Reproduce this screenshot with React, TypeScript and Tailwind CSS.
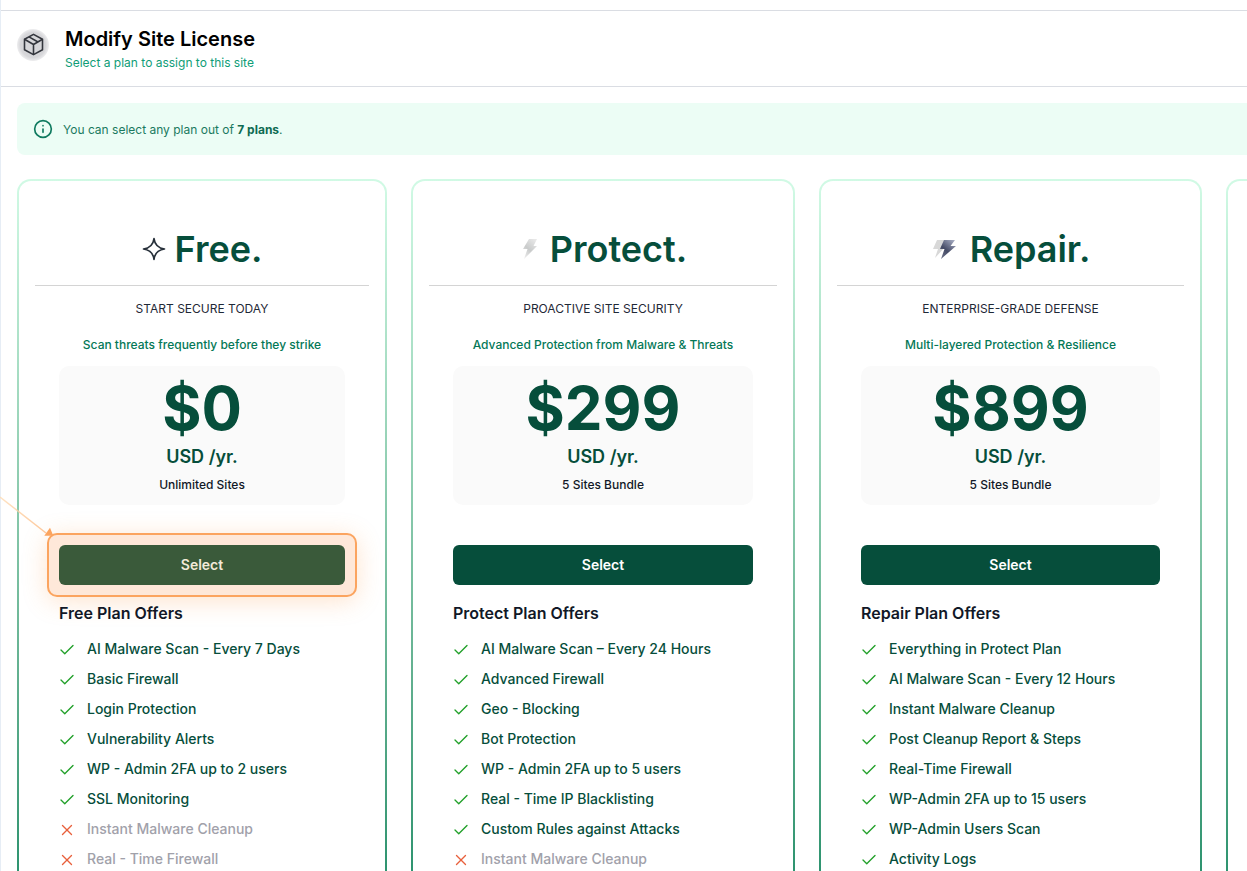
import React from "react";
import { Check, X, Info } from "lucide-react";

type Feature = [string, boolean];
type Plan = {
  name: string;
  tagline: string;
  sub: string;
  price: string;
  sites: string;
  offers: string;
  width: string;
  features: Feature[];
  icon: React.ReactNode;
};

const Star = () => (
  <svg width="24" height="24" viewBox="0 0 24 24" fill="none" stroke="#27303a" strokeWidth="1.7" strokeLinejoin="round">
    <path d="M12 1.500c.7 6.200 3.500 9.500 10.500 10.500-7 1-9.800 4.300-10.500 10.500-.7-6.200-3.500-9.500-10.500-10.500 7-1 9.800-4.300 10.500-10.500Z" />
  </svg>
);

const BoltLight = () => (
  <svg width="22" height="24" viewBox="0 0 22 24">
    <defs>
      <linearGradient id="bl" x1="0.8" y1="0" x2="0.2" y2="1">
        <stop offset="0" stopColor="#e8e8e8" />
        <stop offset="0.55" stopColor="#c9cbcb" />
        <stop offset="1" stopColor="#ececec" />
      </linearGradient>
    </defs>
    <path d="M10 2h8l-3.500 7H18L5 22l3.500-10H4Z" fill="url(#bl)" />
  </svg>
);

const BoltDouble = () => (
  <svg width="30" height="24" viewBox="0 0 30 24">
    <defs>
      <linearGradient id="bd" x1="0.9" y1="0" x2="0.2" y2="1">
        <stop offset="0" stopColor="#aab0c6" />
        <stop offset="0.6" stopColor="#454b66" />
        <stop offset="1" stopColor="#6a6f86" />
      </linearGradient>
    </defs>
    <path d="M6 3h8l-3.500 7H14L4 21l3-9H2Z" fill="#d8d8d8" />
    <path d="M13 3h11l-4.500 6H25L10 22l3.500-10H9Z" fill="url(#bd)" />
  </svg>
);

const plans: Plan[] = [
  {
    name: "Free.",
    tagline: "START SECURE TODAY",
    sub: "Scan threats frequently before they strike",
    price: "$0",
    sites: "Unlimited Sites",
    offers: "Free Plan Offers",
    width: "w-[370px]",
    icon: <Star />,
    features: [
      ["AI Malware Scan - Every 7 Days", true],
      ["Basic Firewall", true],
      ["Login Protection", true],
      ["Vulnerability Alerts", true],
      ["WP - Admin 2FA up to 2 users", true],
      ["SSL Monitoring", true],
      ["Instant Malware Cleanup", false],
      ["Real - Time Firewall", false],
    ],
  },
  {
    name: "Protect.",
    tagline: "PROACTIVE SITE SECURITY",
    sub: "Advanced Protection from Malware & Threats",
    price: "$299",
    sites: "5 Sites Bundle",
    offers: "Protect Plan Offers",
    width: "w-[384px]",
    icon: <BoltLight />,
    features: [
      ["AI Malware Scan – Every 24 Hours", true],
      ["Advanced Firewall", true],
      ["Geo - Blocking", true],
      ["Bot Protection", true],
      ["WP - Admin 2FA up to 5 users", true],
      ["Real - Time IP Blacklisting", true],
      ["Custom Rules against Attacks", true],
      ["Instant Malware Cleanup", false],
    ],
  },
  {
    name: "Repair.",
    tagline: "ENTERPRISE-GRADE DEFENSE",
    sub: "Multi-layered Protection & Resilience",
    price: "$899",
    sites: "5 Sites Bundle",
    offers: "Repair Plan Offers",
    width: "w-[383px]",
    icon: <BoltDouble />,
    features: [
      ["Everything in Protect Plan", true],
      ["AI Malware Scan - Every 12 Hours", true],
      ["Instant Malware Cleanup", true],
      ["Post Cleanup Report & Steps", true],
      ["Real-Time Firewall", true],
      ["WP-Admin 2FA up to 15 users", true],
      ["WP-Admin Users Scan", true],
      ["Activity Logs", true],
    ],
  },
];

function PlanCard({ plan, highlight }: { plan: Plan; highlight?: boolean }) {
  return (
    <div className={`${plan.width} shrink-0 h-[760px] rounded-[14px] p-[2px] bg-gradient-to-b from-[#d1fae5] to-[#0f8a65]`}>
      <div className="h-full rounded-[12px] bg-white px-4">
        <div className="flex h-[105px] items-center justify-center gap-[9px] border-b border-[#d4d4d4] pt-[39px] pb-[8px]">
          {plan.icon}
          <span className="text-[36px] font-semibold leading-[44px] text-[#064e3b]">{plan.name}</span>
        </div>
        <div className="px-6">
          <p className="mt-[14px] text-center text-[12px] leading-[18px] text-[#1f2937]">{plan.tagline}</p>
          <p className="mt-[18px] text-center text-[12px] font-medium leading-[18px] text-[#047857]">{plan.sub}</p>
          <div className="mt-[12px] flex h-[139px] flex-col items-center rounded-[10px] bg-[#fafafa] pt-[12px]">
            <span className="text-[60px] font-bold leading-[60px] text-[#064e3b]">{plan.price}</span>
            <span className="mt-[5px] text-[18px] font-semibold leading-[28px] text-[#064e3b]">USD /yr.</span>
            <span className="mt-[5px] text-[12px] font-medium leading-[18px] text-[#111827]">{plan.sites}</span>
          </div>
          <div className="relative mt-[40px]">
            {highlight && (
              <div className="absolute -inset-x-[12px] -inset-y-[12px] rounded-[10px] border-2 border-[#fba45f] bg-[#fee8d9] shadow-[0_4px_24px_rgba(251,146,60,0.25)]" />
            )}
            <button className={`relative block h-[40px] w-full rounded-[6px] pb-[2px] text-[14px] font-semibold ${highlight ? "bg-[#3a5a3a] text-[#f3ead9]" : "bg-[#064e3b] text-white"}`}>
              Select
            </button>
          </div>
          <h3 className="relative mt-[18px] text-[16px] font-semibold leading-[20px] text-[#111827]">{plan.offers}</h3>
          <ul className="mt-[10px] flex flex-col">
            {plan.features.map(([label, ok]) => (
              <li key={label} className="-ml-px flex h-[30px] items-center gap-[11px]">
                {ok ? (
                  <Check size={18} strokeWidth={1.8} className="mt-[4px] shrink-0 text-[#22a02a]" />
                ) : (
                  <X size={18} strokeWidth={1.8} className="mt-[4px] shrink-0 text-[#e8603c]" />
                )}
                <span className={`text-[14px] font-medium ${ok ? "text-[#064e3b]" : "text-[#a1a1aa]"}`}>{label}</span>
              </li>
            ))}
          </ul>
        </div>
      </div>
    </div>
  );
}

export default function App() {
  return (
    <div className="relative h-[871px] w-[1247px] overflow-hidden bg-white font-['Inter',sans-serif]">
      <div className="h-[10px]" />
      <div className="ml-px border-y border-[#dadde3]">
        <div className="flex h-[75px] items-center gap-[16px] pl-[16px] pb-[1px]">
          <div className="mb-[7px] flex h-[32px] w-[32px] items-center justify-center rounded-full bg-radial from-[#d6d6d9] from-55% to-[#f4f4f5] to-75%">
            <svg width="27" height="27" viewBox="0 0 24 24" fill="none" stroke="#33363d" strokeWidth="1.4" strokeLinejoin="round">
              <path d="M12 3 20 7.300v9.400L12 21l-8-4.300V7.300Z" />
              <path d="M4 7.300 12 12l8-4.700M12 12v9M8 5.200l8 4.600" />
            </svg>
          </div>
          <div>
            <h1 className="text-[20px] font-semibold leading-[28px] text-black">Modify Site License</h1>
            <p className="mt-[2px] text-[12px] leading-[16px] text-[#0f9d77]">Select a plan to assign to this site</p>
          </div>
        </div>
      </div>
      <div className="pl-[17px] pt-[16px]">
        <div className="flex h-[52px] w-[1240px] items-center gap-[10px] rounded-[8px] bg-[#ecfdf5] pl-[16px]">
          <Info size={20} strokeWidth={2} className="text-[#0f7a5f]" />
          <p className="mt-[2px] text-[12px] text-[#1b7a5f]">
            You can select any plan out of <strong className="font-bold text-[#0f6b52]">7 plans</strong>.
          </p>
        </div>
        <div className="mt-[24px] flex gap-[24px]">
          <PlanCard plan={plans[0]} highlight />
          <PlanCard plan={plans[1]} />
          <PlanCard plan={plans[2]} />
          <div className="h-[760px] w-[200px] shrink-0 rounded-[14px] bg-gradient-to-b from-[#d1fae5] to-[#0f8a65] p-[2px]">
            <div className="h-full rounded-[12px] bg-white" />
          </div>
        </div>
      </div>
      <div className="absolute bottom-0 left-0 top-0 w-px bg-[#e6edf5]" />
      <svg className="absolute left-0 top-[495px]" width="56" height="46" viewBox="0 0 56 46" fill="none">
        <defs>
          <linearGradient id="arrow" x1="0" y1="0" x2="1" y2="1">
            <stop offset="0" stopColor="#fed7aa" stopOpacity="0.7" />
            <stop offset="1" stopColor="#fdc699" />
          </linearGradient>
        </defs>
        <path d="M0 2 46 38" stroke="url(#arrow)" strokeWidth="1.500" />
        <path d="M44.300 40.700 50 32.700 53.300 40.700Z" fill="#fba45f" />
      </svg>
    </div>
  );
}
